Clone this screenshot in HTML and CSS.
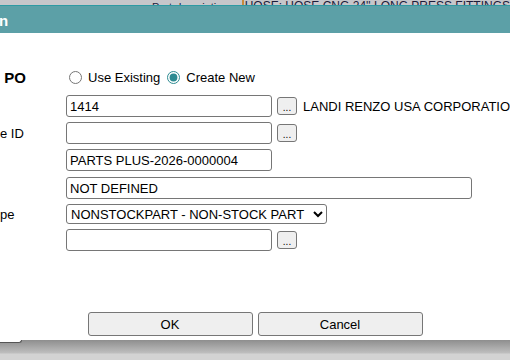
FILE: index.html
```html
<!DOCTYPE html>
<html lang="en">
<head>
    <meta charset="UTF-8">
    <title>Create PO</title>
    <link rel="stylesheet" href="styles.css">
</head>
<body>
    <div class="page-strip">
        <span class="strip-label">Part description:</span>
        <span class="strip-mark"></span>
        <span class="strip-value">HOSE: HOSE CNG 24'' LONG PRESS FITTINGS</span>
    </div>

    <div class="dialog">
        <div class="titlebar"><span class="title">n</span></div>
        <form class="dialog-body">
            <div class="row row-po">
                <label class="label label-bold">&nbsp;PO</label>
                <div class="field">
                    <label class="radio"><input type="radio" name="po_mode" value="existing"> Use Existing</label>
                    <label class="radio"><input type="radio" name="po_mode" value="new" checked> Create New</label>
                </div>
            </div>

            <div class="row">
                <label class="label"></label>
                <div class="field">
                    <input type="text" class="input" value="1414">
                    <button type="button" class="pick">...</button>
                    <span class="vendor-name">LANDI RENZO USA CORPORATION</span>
                </div>
            </div>

            <div class="row">
                <label class="label">e ID</label>
                <div class="field">
                    <input type="text" class="input" value="">
                    <button type="button" class="pick">...</button>
                </div>
            </div>

            <div class="row">
                <label class="label"></label>
                <div class="field">
                    <input type="text" class="input" value="PARTS PLUS-2026-0000004">
                </div>
            </div>

            <div class="row row-wide">
                <label class="label"></label>
                <div class="field">
                    <input type="text" class="input input-wide" value="NOT DEFINED">
                </div>
            </div>

            <div class="row">
                <label class="label">pe</label>
                <div class="field">
                    <select class="select">
                        <option>NONSTOCKPART - NON-STOCK PART</option>
                        <option>STOCKPART - STOCK PART</option>
                    </select>
                </div>
            </div>

            <div class="row">
                <label class="label"></label>
                <div class="field">
                    <input type="text" class="input" value="">
                    <button type="button" class="pick">...</button>
                </div>
            </div>

            <div class="actions">
                <button type="submit" class="btn">OK</button>
                <button type="button" class="btn">Cancel</button>
            </div>
        </form>
    </div>

    <div class="page-bottom">
        <div class="under-box"></div>
    </div>
</body>
</html>
```

FILE: styles.css
```css
body {
    font-family: "Liberation Sans", Arial, sans-serif;
    margin: 0;
    width: 510px;
    height: 360px;
    overflow: hidden;
    background-color: #d3d3d3;
}
.page-strip {
    height: 5px;
    overflow: hidden;
    background-color: #c7c6ca;
    display: flex;
    align-items: flex-start;
    font-size: 11px;
    line-height: 12px;
    color: #1c1c3a;
    white-space: nowrap;
}
.strip-label {
    margin-left: 152px;
    margin-top: 1px;
    width: 101px;
}
.strip-mark {
    width: 2px;
    height: 5px;
    background-color: #c98a3a;
}
.strip-value {
    margin-left: 1px;
    font-size: 12px;
}
.dialog {
    background-color: #fff;
}
.titlebar {
    height: 27px;
    background-color: #5ca0a7;
    border-top: 1px solid #2f9aa3;
    display: flex;
    align-items: center;
}
.title {
    color: #fff;
    font-weight: bold;
    font-size: 15px;
    margin-left: -1px;
    margin-top: 1px;
}
.dialog-body {
    height: 269px;
    padding: 34px 0 4px 0;
    display: flex;
    flex-direction: column;
    gap: 5px;
    font-size: 13px;
    color: #000;
}
.row {
    display: flex;
    align-items: center;
}
.row-po {
    height: 20px;
    margin-bottom: 3px;
}
.row-wide {
    margin-top: 1px;
}
.label {
    width: 66px;
    flex-shrink: 0;
    white-space: nowrap;
}
.label-bold {
    font-weight: bold;
    font-size: 15px;
}
.field {
    display: flex;
    align-items: center;
    white-space: nowrap;
}
.radio {
    display: flex;
    align-items: center;
    margin-right: 4px;
}
.radio input {
    accent-color: #2d8a91;
    margin: 0 6px 0 3px;
    width: 13px;
    height: 13px;
}
.input {
    width: 206px;
    height: 22px;
    box-sizing: border-box;
    padding: 1px 3px;
    border: 1px solid #767676;
    border-radius: 3px;
    font-family: "Liberation Sans", Arial, sans-serif;
    font-size: 13px;
    margin: 0;
}
.input-wide {
    width: 406px;
}
.pick {
    width: 20px;
    height: 18px;
    margin-left: 5px;
    padding: 4px 0 0 0;
    border: 1px solid #767676;
    border-radius: 3px;
    background-color: #efefef;
    font-size: 10px;
    line-height: 10px;
}
.vendor-name {
    margin-left: 6px;
}
.select {
    width: 261px;
    height: 20px;
    font-family: "Liberation Sans", Arial, sans-serif;
    font-size: 13px;
    border: 1px solid #767676;
    border-radius: 3px;
    background-color: #fff;
    margin: 0;
}
.actions {
    margin-top: auto;
    display: flex;
    justify-content: center;
    gap: 5px;
}
.btn {
    width: 165px;
    height: 24px;
    border: 1px solid #767676;
    border-radius: 3px;
    background-color: #efefef;
    font-family: "Liberation Sans", Arial, sans-serif;
    font-size: 13px;
}
.page-bottom {
    height: 24px;
    background: linear-gradient(#8e8e8e, #bebebe 13px, #d3d3d3 14px);
}
.under-box {
    width: 21px;
    height: 2px;
    background-color: #fff;
    border-bottom: 1px solid #555;
    border-right: 1px solid #555;
    border-bottom-right-radius: 3px;
}
```
